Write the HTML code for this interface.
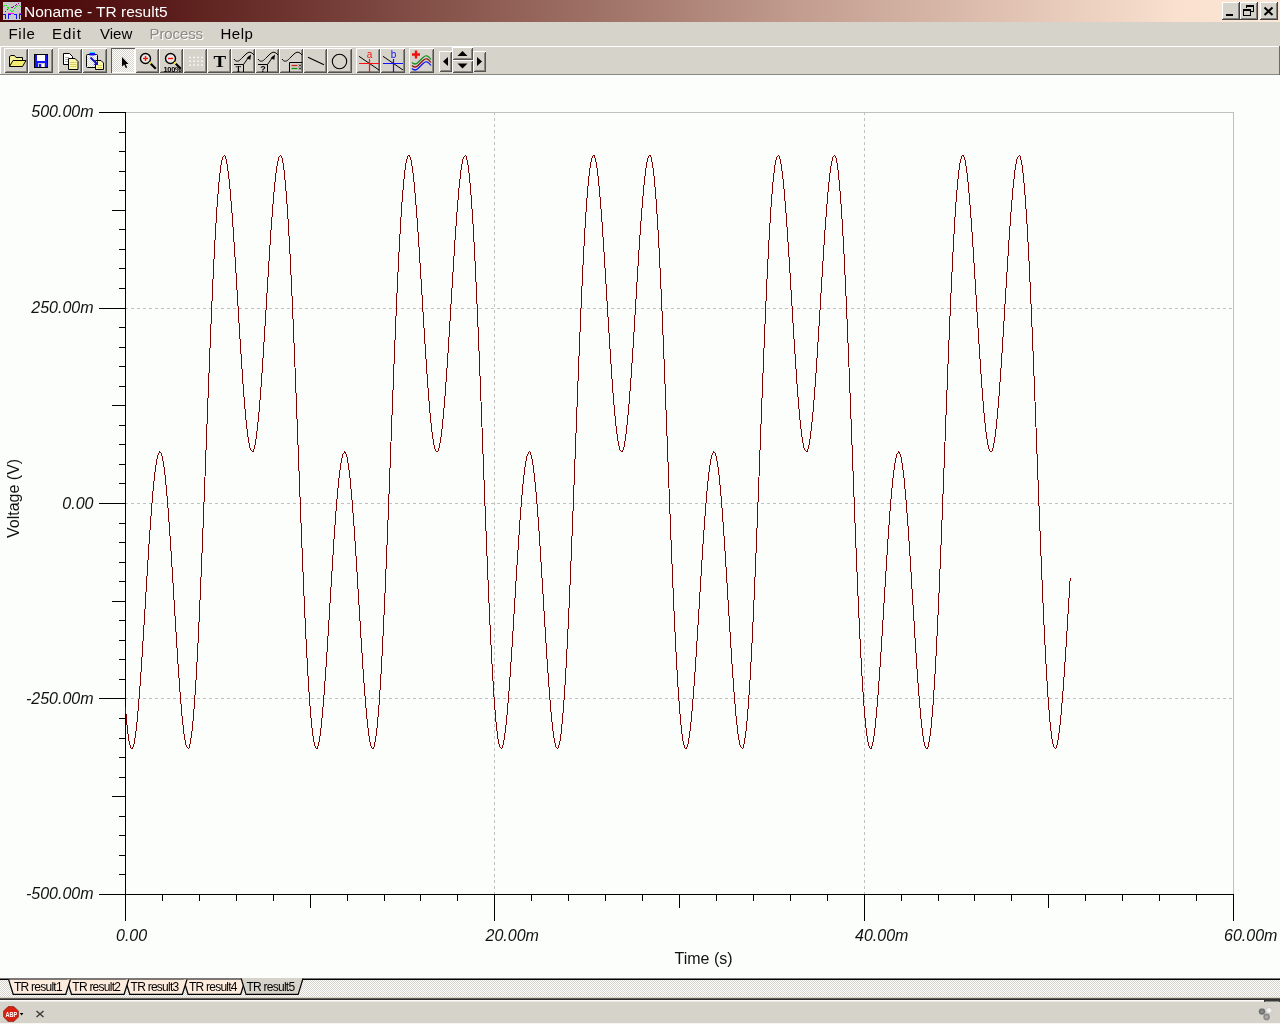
<!DOCTYPE html>
<html><head><meta charset="utf-8"><title>Noname - TR result5</title>
<style>
html,body{margin:0;padding:0;width:1280px;height:1024px;overflow:hidden;background:#fcfefc;font-family:"Liberation Sans",sans-serif;}
.abs{position:absolute}
#title{left:0;top:0;width:1280px;height:22px;background:linear-gradient(to right,#480306 0%,#581a18 12%,#a67a6e 50%,#c29d90 62.5%,#f9e0cf 92%,#fde8d7 100%);}
#title .cap{left:24px;top:3px;color:#fff;font-size:15.5px;line-height:18px;white-space:nowrap;letter-spacing:0}
#menu{left:0;top:22px;width:1280px;height:24px;background:#d6d3ca}
#menu span{position:absolute;top:3px;font-size:15px;line-height:18px;color:#000;white-space:nowrap}
#menu span.dis{color:#8c8a84;text-shadow:1px 1px 0 #fff}
#tool{left:0;top:46px;width:1280px;height:29px;background:#d6d3ca}
#plot{left:0;top:75px;width:1280px;height:904px;background:#fcfefc}
#tabs{left:0;top:978px;width:1280px;height:22px}
#status{left:0;top:1000px;width:1280px;height:24px;background:#d6d3ca}
svg{position:absolute;left:0;top:0;overflow:visible}
.grid{stroke:#c0c0c0;stroke-width:1;stroke-dasharray:3 3;shape-rendering:crispEdges;fill:none}
.lb{stroke:#c0c0c0;stroke-width:1;fill:none;shape-rendering:crispEdges}
.ax{stroke:#000;stroke-width:1;fill:none;shape-rendering:crispEdges}
.cvf{fill:#800000;stroke:none;shape-rendering:crispEdges}
.it{font:italic 16px "Liberation Sans",sans-serif;fill:#111}
.rg{font:16px "Liberation Sans",sans-serif;fill:#111}
.tb{font:12px "Liberation Sans",sans-serif;fill:#000;letter-spacing:-.75px}
</style></head><body><div id="root" style="position:absolute;left:0;top:0;width:1280px;height:1024px;will-change:transform;">
<div id="title" class="abs">
<svg width="24" height="22" viewBox="0 0 24 22" shape-rendering="crispEdges"><rect x="3" y="2" width="18" height="18" fill="#c9c9c9"/><rect x="3" y="6" width="1" height="1" fill="#10f010"/><rect x="4" y="5" width="1" height="1" fill="#10f010"/><rect x="6" y="5" width="1" height="1" fill="#10f010"/><rect x="7" y="7" width="1" height="1" fill="#10f010"/><rect x="8" y="7" width="1" height="1" fill="#10f010"/><rect x="8" y="8" width="1" height="1" fill="#10f010"/><rect x="10" y="10" width="1" height="1" fill="#10f010"/><rect x="11" y="11" width="1" height="1" fill="#10f010"/><rect x="12" y="11" width="1" height="1" fill="#10f010"/><rect x="13" y="10" width="1" height="1" fill="#10f010"/><rect x="14" y="8" width="1" height="1" fill="#10f010"/><rect x="15" y="7" width="1" height="1" fill="#10f010"/><rect x="16" y="6" width="1" height="1" fill="#10f010"/><rect x="17" y="5" width="1" height="1" fill="#10f010"/><rect x="19" y="5" width="1" height="1" fill="#10f010"/><rect x="20" y="6" width="1" height="1" fill="#10f010"/><rect x="5" y="11" width="1" height="1" fill="#900090"/><rect x="7" y="9" width="1" height="1" fill="#900090"/><rect x="11" y="7" width="1" height="1" fill="#900090"/><rect x="12" y="7" width="1" height="1" fill="#900090"/><rect x="13" y="6" width="1" height="1" fill="#900090"/><rect x="15" y="5" width="1" height="1" fill="#900090"/><rect x="16" y="4" width="1" height="1" fill="#900090"/><rect x="18" y="3" width="1" height="1" fill="#900090"/><rect x="8" y="13" width="6" height="1" fill="#ff10e0"/><rect x="19" y="13" width="2" height="1" fill="#ff10e0"/><rect x="3" y="14" width="3" height="1" fill="#1010ff"/><rect x="8" y="14" width="3" height="1" fill="#1010ff"/><rect x="14" y="14" width="3" height="1" fill="#1010ff"/><rect x="19" y="14" width="2" height="1" fill="#1010ff"/><rect x="5" y="14" width="1" height="5" fill="#1010ff"/><rect x="8" y="14" width="1" height="5" fill="#1010ff"/><rect x="16" y="14" width="1" height="5" fill="#1010ff"/><rect x="19" y="14" width="1" height="5" fill="#1010ff"/></svg>
<div class="abs cap">Noname - TR result5</div>
<svg width="1280" height="22" viewBox="0 0 1280 22" shape-rendering="crispEdges">
<g id="wb">
<rect x="1222" y="2" width="17" height="17" fill="#d6d3ca"/><path d="M1222.5 19V2.5H1239" stroke="#fff" fill="none"/><path d="M1223 18.5H1238.5V3" stroke="#808080" fill="none"/><path d="M1222 19.5H1239.5V2" stroke="#404040" fill="none"/>
<rect x="1226" y="14" width="7" height="2" fill="#000"/>
<rect x="1240" y="2" width="17" height="17" fill="#d6d3ca"/><path d="M1240.5 19V2.5H1257" stroke="#fff" fill="none"/><path d="M1241 18.5H1256.5V3" stroke="#808080" fill="none"/><path d="M1240 19.5H1257.5V2" stroke="#404040" fill="none"/>
<path d="M1246.5 8V5.5H1253.5V11.5H1251" stroke="#000" fill="none"/><path d="M1246 6H1254" stroke="#000" stroke-width="1.600"/>
<path d="M1243.5 9.5H1250.5V15.5H1243.5Z" stroke="#000" fill="none"/><path d="M1243 10H1251" stroke="#000" stroke-width="1.600"/>
<rect x="1260" y="2" width="17" height="17" fill="#d6d3ca"/><path d="M1260.5 19V2.5H1277" stroke="#fff" fill="none"/><path d="M1261 18.5H1276.5V3" stroke="#808080" fill="none"/><path d="M1260 19.5H1277.5V2" stroke="#404040" fill="none"/>
</g>
<path d="M1264.5 7.5L1272.5 15M1272.5 7.5L1264.5 15" stroke="#000" stroke-width="2" fill="none" shape-rendering="auto"/>
</svg>
</div>
<div id="menu" class="abs">
<span style="left:8.5px;letter-spacing:.7px">File</span><span style="left:52px;letter-spacing:1px">Edit</span><span style="left:100px">View</span><span class="dis" style="left:149.5px;letter-spacing:-.1px">Process</span><span style="left:220.5px;letter-spacing:.5px">Help</span>
</div>
<div id="tool" class="abs">
<svg width="1280" height="29" viewBox="0 46 1280 29">
<defs><pattern id="dz" width="2" height="2" patternUnits="userSpaceOnUse"><rect width="2" height="2" fill="#fff"/><rect width="1" height="1" fill="#d6d3ca"/><rect x="1" y="1" width="1" height="1" fill="#d6d3ca"/></pattern></defs>
<g shape-rendering="crispEdges">
<path d="M0 46.5H1280" stroke="#fff"/><path d="M0.5 46V75" stroke="#fff"/>
<path d="M0 74.5H1280" stroke="#8a8882"/><path d="M1279.5 46V75" stroke="#6e6c68"/>
<rect x="4" y="48" width="24" height="25" fill="#d6d3ca"/><path d="M4.5 73V48.5H28" stroke="#fff" fill="none"/><path d="M6 71.5H26.5V50" stroke="#8a8882" fill="none"/><path d="M5 72.5H27.5V49" stroke="#55534f" fill="none"/>
<rect x="28" y="48" width="25" height="25" fill="#d6d3ca"/><path d="M28.5 73V48.5H53" stroke="#fff" fill="none"/><path d="M30 71.5H51.5V50" stroke="#8a8882" fill="none"/><path d="M29 72.5H52.5V49" stroke="#55534f" fill="none"/>
<rect x="58" y="48" width="24" height="25" fill="#d6d3ca"/><path d="M58.5 73V48.5H82" stroke="#fff" fill="none"/><path d="M60 71.5H80.5V50" stroke="#8a8882" fill="none"/><path d="M59 72.5H81.5V49" stroke="#55534f" fill="none"/>
<rect x="82" y="48" width="25" height="25" fill="#d6d3ca"/><path d="M82.5 73V48.5H107" stroke="#fff" fill="none"/><path d="M84 71.5H105.5V50" stroke="#8a8882" fill="none"/><path d="M83 72.5H106.5V49" stroke="#55534f" fill="none"/>
<rect x="135" y="48" width="24" height="25" fill="#d6d3ca"/><path d="M135.5 73V48.5H159" stroke="#fff" fill="none"/><path d="M137 71.5H157.5V50" stroke="#8a8882" fill="none"/><path d="M136 72.5H158.5V49" stroke="#55534f" fill="none"/>
<rect x="159" y="48" width="24" height="25" fill="#d6d3ca"/><path d="M159.5 73V48.5H183" stroke="#fff" fill="none"/><path d="M161 71.5H181.5V50" stroke="#8a8882" fill="none"/><path d="M160 72.5H182.5V49" stroke="#55534f" fill="none"/>
<rect x="183" y="48" width="24" height="25" fill="#d6d3ca"/><path d="M183.5 73V48.5H207" stroke="#fff" fill="none"/><path d="M185 71.5H205.5V50" stroke="#8a8882" fill="none"/><path d="M184 72.5H206.5V49" stroke="#55534f" fill="none"/>
<rect x="207" y="48" width="24" height="25" fill="#d6d3ca"/><path d="M207.5 73V48.5H231" stroke="#fff" fill="none"/><path d="M209 71.5H229.5V50" stroke="#8a8882" fill="none"/><path d="M208 72.5H230.5V49" stroke="#55534f" fill="none"/>
<rect x="231" y="48" width="24" height="25" fill="#d6d3ca"/><path d="M231.5 73V48.5H255" stroke="#fff" fill="none"/><path d="M233 71.5H253.5V50" stroke="#8a8882" fill="none"/><path d="M232 72.5H254.5V49" stroke="#55534f" fill="none"/>
<rect x="255" y="48" width="24" height="25" fill="#d6d3ca"/><path d="M255.5 73V48.5H279" stroke="#fff" fill="none"/><path d="M257 71.5H277.5V50" stroke="#8a8882" fill="none"/><path d="M256 72.5H278.5V49" stroke="#55534f" fill="none"/>
<rect x="279" y="48" width="24" height="25" fill="#d6d3ca"/><path d="M279.5 73V48.5H303" stroke="#fff" fill="none"/><path d="M281 71.5H301.5V50" stroke="#8a8882" fill="none"/><path d="M280 72.5H302.5V49" stroke="#55534f" fill="none"/>
<rect x="303" y="48" width="24" height="25" fill="#d6d3ca"/><path d="M303.5 73V48.5H327" stroke="#fff" fill="none"/><path d="M305 71.5H325.5V50" stroke="#8a8882" fill="none"/><path d="M304 72.5H326.5V49" stroke="#55534f" fill="none"/>
<rect x="327" y="48" width="25" height="25" fill="#d6d3ca"/><path d="M327.5 73V48.5H352" stroke="#fff" fill="none"/><path d="M329 71.5H350.5V50" stroke="#8a8882" fill="none"/><path d="M328 72.5H351.5V49" stroke="#55534f" fill="none"/>
<rect x="356" y="48" width="24" height="25" fill="#d6d3ca"/><path d="M356.5 73V48.5H380" stroke="#fff" fill="none"/><path d="M358 71.5H378.5V50" stroke="#8a8882" fill="none"/><path d="M357 72.5H379.5V49" stroke="#55534f" fill="none"/>
<rect x="380" y="48" width="25" height="25" fill="#d6d3ca"/><path d="M380.5 73V48.5H405" stroke="#fff" fill="none"/><path d="M382 71.5H403.5V50" stroke="#8a8882" fill="none"/><path d="M381 72.5H404.5V49" stroke="#55534f" fill="none"/>
<rect x="409" y="48" width="25" height="25" fill="#d6d3ca"/><path d="M409.5 73V48.5H434" stroke="#fff" fill="none"/><path d="M411 71.5H432.5V50" stroke="#8a8882" fill="none"/><path d="M410 72.5H433.5V49" stroke="#55534f" fill="none"/>
<rect x="111" y="48" width="24" height="25" fill="url(#dz)"/><path d="M111.5 73V48.5H135" stroke="#5a5854" fill="none"/><path d="M112 72.5H134.5V49" stroke="#fff" fill="none"/>
<rect x="439" y="51" width="13" height="21" fill="#d6d3ca"/><path d="M439.5 72V51.5H452" stroke="#fff" fill="none"/><path d="M441 70.5H450.5V53" stroke="#8a8882" fill="none"/><path d="M440 71.5H451.5V52" stroke="#55534f" fill="none"/>
<rect x="473" y="51" width="13" height="21" fill="#d6d3ca"/><path d="M473.5 72V51.5H486" stroke="#fff" fill="none"/><path d="M475 70.5H484.5V53" stroke="#8a8882" fill="none"/><path d="M474 71.5H485.5V52" stroke="#55534f" fill="none"/>
<rect x="452" y="47" width="21" height="13" fill="#d6d3ca"/><path d="M452.5 60V47.5H473" stroke="#fff" fill="none"/><path d="M454 58.5H471.5V49" stroke="#8a8882" fill="none"/><path d="M453 59.5H472.5V48" stroke="#55534f" fill="none"/>
<rect x="452" y="60" width="21" height="13" fill="#d6d3ca"/><path d="M452.5 73V60.5H473" stroke="#fff" fill="none"/><path d="M454 71.5H471.5V62" stroke="#8a8882" fill="none"/><path d="M453 72.5H472.5V61" stroke="#55534f" fill="none"/>
</g>
<g stroke="#000" stroke-width="1" stroke-linejoin="round"><path d="M9.5 66.5V56.5L11 55.5H14.5L16 57.5H22.5V60" fill="#f6f29a"/><path d="M9.5 66.5L13 60.5H26L22.5 66.5Z" fill="#f3ee6e"/></g>
<g shape-rendering="crispEdges"><rect x="34.5" y="54.5" width="13" height="13" rx="1" fill="#1414ff" stroke="#000"/><rect x="37" y="55" width="8" height="6" fill="#fff"/><rect x="38" y="63" width="7" height="4" fill="#c8c8c8"/><rect x="39" y="64" width="2" height="3" fill="#1414ff"/><rect x="42" y="64" width="2" height="3" fill="#fff"/></g>
<g stroke="#000" stroke-width="1"><path d="M63.5 53.5H69.5L72.5 56.5V64.5H63.5Z" fill="#fff"/><path d="M65 57.5h4M65 59.5h3M65 61.5h3" stroke="#b0b0b0"/><path d="M68.5 58.5H75L78 61.5V69.5H68.5Z" fill="#fbf7b0"/><path d="M70 62.5h6.5M70 64.5h6.5M70 66.5h6.5" stroke="#d8d060"/></g>
<g stroke="#000" stroke-width="1"><rect x="86.5" y="54.5" width="11" height="13" rx="1" fill="url(#dz)"/><rect x="89.5" y="52.5" width="5.5" height="3" rx="1" fill="#1010ff" stroke="none"/><path d="M90 52.5h4.5" stroke="#20e0f0"/><path d="M95.5 60.5H101L103.5 63V69.5H95.5Z" fill="#fbf7b0"/><path d="M97.5 65.5h4.5M97.5 67.5h4.5" stroke="#d8d060"/><path d="M90.5 57.5L96 63" stroke="#1018c0" stroke-width="2"/><path d="M98 65V60.5L93.5 65Z" fill="#1018c0" stroke="none"/></g>
<path d="M122 57V66.5L124.200 64.5L125.800 68L127.200 67.400L125.600 64H128.5Z" fill="#000"/>
<g fill="none"><circle cx="145.5" cy="58.5" r="5" stroke="#000" stroke-width="1.400" fill="#e9e7e3"/><path d="M149.3 62.300L150.8 63.800" stroke="#f0f000" stroke-width="1.600"/><path d="M150.8 63.800L155.8 68.800" stroke="#000" stroke-width="2.200"/><path d="M143.0 58.5h5" stroke="#ff1010" stroke-width="1.400"/><path d="M145.5 56v5" stroke="#ff1010" stroke-width="1.400"/></g>
<g fill="none"><circle cx="170.5" cy="58.5" r="5" stroke="#000" stroke-width="1.400" fill="#e9e7e3"/><path d="M174.3 62.300L175.8 63.800" stroke="#f0f000" stroke-width="1.600"/><path d="M175.8 63.800L180.8 68.800" stroke="#000" stroke-width="2.200"/><path d="M168.0 58.5h5" stroke="#ff1010" stroke-width="1.400"/></g>
<text x="163.5" y="71.5" style="font:bold 7.5px 'Liberation Sans',sans-serif;fill:#000;letter-spacing:-.3px">100%</text>
<rect x="189.3" y="56.7" width="1.5" height="1.5" fill="#fff"/><rect x="189.3" y="60.5" width="1.5" height="1.5" fill="#fff"/><rect x="189.3" y="64.3" width="1.5" height="1.5" fill="#fff"/><rect x="193.3" y="56.7" width="1.5" height="1.5" fill="#fff"/><rect x="193.3" y="60.5" width="1.5" height="1.5" fill="#fff"/><rect x="193.3" y="64.3" width="1.5" height="1.5" fill="#fff"/><rect x="197.4" y="56.7" width="1.5" height="1.5" fill="#fff"/><rect x="197.4" y="60.5" width="1.5" height="1.5" fill="#fff"/><rect x="197.4" y="64.3" width="1.5" height="1.5" fill="#fff"/><rect x="201.3" y="56.7" width="1.5" height="1.5" fill="#fff"/><rect x="201.3" y="60.5" width="1.5" height="1.5" fill="#fff"/><rect x="201.3" y="64.3" width="1.5" height="1.5" fill="#fff"/>
<text transform="translate(219.800 67) scale(1.08 1)" text-anchor="middle" style="font:bold 17.5px 'Liberation Serif',serif;fill:#000">T</text>
<path d="M234.0 59C236.0 62 238.5 62 241.5 58.5L246.0 54C249.0 51.5 251.0 51.5 254.0 55" stroke="#000" stroke-width="1" fill="none"/>
<path d="M234.0 64.5H243.5V72M243.5 64.5L249.5 56" stroke="#000" fill="none"/>
<path d="M251.0 54.5L246.5 58.300L250.3 59.800Z" fill="#000"/>
<text x="238.5" y="71.5" text-anchor="middle" style="font:bold 8px 'Liberation Serif',serif;fill:#000">T</text>
<path d="M258.0 59C260.0 62 262.5 62 265.5 58.5L270.0 54C273.0 51.5 275.0 51.5 278.0 55" stroke="#000" stroke-width="1" fill="none"/>
<path d="M258.0 64.5H267.5V72M267.5 64.5L273.5 56" stroke="#000" fill="none"/>
<path d="M275.0 54.5L270.5 58.300L274.3 59.800Z" fill="#000"/>
<text x="263.0" y="72" text-anchor="middle" style="font:bold 9px 'Liberation Sans',sans-serif;fill:#000">?</text>
<path d="M282.0 59C284.0 62 286.5 62 289.5 58.5L294.0 54C297.0 51.5 299.0 51.5 302.0 55" stroke="#000" stroke-width="1" fill="none"/>
<path d="M289.5 72V62.5H302" stroke="#000" fill="none"/>
<path d="M291.5 65.5h6" stroke="#d02020" stroke-width="1.300"/><path d="M291.5 68.5h6" stroke="#109010" stroke-width="1.300"/>
<path d="M299 64.5l2 2m0 -2l-2 2M299 67.5l2 2m0 -2l-2 2" stroke="#000" stroke-width=".9"/>
<path d="M308 57.300L324 64.800" stroke="#000" stroke-width="1.100"/>
<circle cx="339.5" cy="61.5" r="7.200" stroke="#000" stroke-width="1.100" fill="none"/>
<path d="M359.0 56.300L379.0 70" stroke="#000" stroke-width="1"/>
<path d="M359.0 63.5h20M369.5 59v13" stroke="#ff1010" stroke-width="1.200" fill="none"/>
<text x="369.5" y="58" text-anchor="middle" style="font:10px 'Liberation Sans',sans-serif;fill:#ff1010">a</text>
<path d="M383.0 56.300L403.0 70" stroke="#000" stroke-width="1"/>
<path d="M383.0 63.5h20M393.5 59v13" stroke="#1010ff" stroke-width="1.200" fill="none"/>
<text x="393.5" y="58" text-anchor="middle" style="font:10px 'Liberation Sans',sans-serif;fill:#1010ff">b</text>
<path d="M412 54.5h8M416 50.5v8" stroke="#f01010" stroke-width="2.400"/>
<path d="M412 62.5C414 64.5 416 64.5 418 62.5L423 57.5C426 54.5 428 55.5 431 59.5" stroke="#109020" stroke-width="1.200" fill="none"/>
<path d="M412 65.5C414 67.5 416 67.5 418 65.5L423 60.5C426 57.5 428 58.5 431 62.5" stroke="#901010" stroke-width="1.200" fill="none"/>
<path d="M412 68.5C414 70.5 416 70.5 418 68.5L423 63.5C426 60.5 428 61.5 431 65.5" stroke="#1010ff" stroke-width="1.200" fill="none"/>
<path d="M443 61.5L448 57V66Z" fill="#000"/>
<path d="M482 61.5L477 57V66Z" fill="#000"/>
<path d="M462.5 51L467.5 56H457.5Z" fill="#000"/>
<path d="M462.5 68.5L467.5 63.5H457.5Z" fill="#000"/>
</svg>
</div>
<div id="plot" class="abs"><svg width="1280" height="904" viewBox="0 75 1280 904">
<line x1="125" y1="308.5" x2="1233" y2="308.5" class="grid"/>
<line x1="125" y1="503.5" x2="1233" y2="503.5" class="grid"/>
<line x1="125" y1="698.5" x2="1233" y2="698.5" class="grid"/>
<line x1="494.5" y1="112" x2="494.5" y2="894" class="grid"/>
<line x1="864.5" y1="112" x2="864.5" y2="894" class="grid"/>
<path d="M126 112.5H1233.5V894" class="lb"/>
<path d="M125.5 112V920 M99 894.5H1234" class="ax"/>
<line x1="99" y1="112.5" x2="126" y2="112.5" class="ax"/>
<line x1="119" y1="132.5" x2="126" y2="132.5" class="ax"/>
<line x1="119" y1="151.5" x2="126" y2="151.5" class="ax"/>
<line x1="119" y1="171.5" x2="126" y2="171.5" class="ax"/>
<line x1="119" y1="190.5" x2="126" y2="190.5" class="ax"/>
<line x1="112" y1="210.5" x2="126" y2="210.5" class="ax"/>
<line x1="119" y1="229.5" x2="126" y2="229.5" class="ax"/>
<line x1="119" y1="249.5" x2="126" y2="249.5" class="ax"/>
<line x1="119" y1="268.5" x2="126" y2="268.5" class="ax"/>
<line x1="119" y1="288.5" x2="126" y2="288.5" class="ax"/>
<line x1="99" y1="308.5" x2="126" y2="308.5" class="ax"/>
<line x1="119" y1="327.5" x2="126" y2="327.5" class="ax"/>
<line x1="119" y1="347.5" x2="126" y2="347.5" class="ax"/>
<line x1="119" y1="366.5" x2="126" y2="366.5" class="ax"/>
<line x1="119" y1="386.5" x2="126" y2="386.5" class="ax"/>
<line x1="112" y1="405.5" x2="126" y2="405.5" class="ax"/>
<line x1="119" y1="425.5" x2="126" y2="425.5" class="ax"/>
<line x1="119" y1="444.5" x2="126" y2="444.5" class="ax"/>
<line x1="119" y1="464.5" x2="126" y2="464.5" class="ax"/>
<line x1="119" y1="483.5" x2="126" y2="483.5" class="ax"/>
<line x1="99" y1="503.5" x2="126" y2="503.5" class="ax"/>
<line x1="119" y1="523.5" x2="126" y2="523.5" class="ax"/>
<line x1="119" y1="542.5" x2="126" y2="542.5" class="ax"/>
<line x1="119" y1="562.5" x2="126" y2="562.5" class="ax"/>
<line x1="119" y1="581.5" x2="126" y2="581.5" class="ax"/>
<line x1="112" y1="601.5" x2="126" y2="601.5" class="ax"/>
<line x1="119" y1="620.5" x2="126" y2="620.5" class="ax"/>
<line x1="119" y1="640.5" x2="126" y2="640.5" class="ax"/>
<line x1="119" y1="659.5" x2="126" y2="659.5" class="ax"/>
<line x1="119" y1="679.5" x2="126" y2="679.5" class="ax"/>
<line x1="99" y1="698.5" x2="126" y2="698.5" class="ax"/>
<line x1="119" y1="718.5" x2="126" y2="718.5" class="ax"/>
<line x1="119" y1="738.5" x2="126" y2="738.5" class="ax"/>
<line x1="119" y1="757.5" x2="126" y2="757.5" class="ax"/>
<line x1="119" y1="777.5" x2="126" y2="777.5" class="ax"/>
<line x1="112" y1="796.5" x2="126" y2="796.5" class="ax"/>
<line x1="119" y1="816.5" x2="126" y2="816.5" class="ax"/>
<line x1="119" y1="835.5" x2="126" y2="835.5" class="ax"/>
<line x1="119" y1="855.5" x2="126" y2="855.5" class="ax"/>
<line x1="119" y1="874.5" x2="126" y2="874.5" class="ax"/>
<line x1="99" y1="894.5" x2="126" y2="894.5" class="ax"/>
<line x1="125.5" y1="894" x2="125.5" y2="921" class="ax"/>
<line x1="162.5" y1="894" x2="162.5" y2="901" class="ax"/>
<line x1="199.5" y1="894" x2="199.5" y2="901" class="ax"/>
<line x1="236.5" y1="894" x2="236.5" y2="901" class="ax"/>
<line x1="273.5" y1="894" x2="273.5" y2="901" class="ax"/>
<line x1="310.5" y1="894" x2="310.5" y2="908" class="ax"/>
<line x1="347.5" y1="894" x2="347.5" y2="901" class="ax"/>
<line x1="384.5" y1="894" x2="384.5" y2="901" class="ax"/>
<line x1="420.5" y1="894" x2="420.5" y2="901" class="ax"/>
<line x1="457.5" y1="894" x2="457.5" y2="901" class="ax"/>
<line x1="494.5" y1="894" x2="494.5" y2="921" class="ax"/>
<line x1="531.5" y1="894" x2="531.5" y2="901" class="ax"/>
<line x1="568.5" y1="894" x2="568.5" y2="901" class="ax"/>
<line x1="605.5" y1="894" x2="605.5" y2="901" class="ax"/>
<line x1="642.5" y1="894" x2="642.5" y2="901" class="ax"/>
<line x1="679.5" y1="894" x2="679.5" y2="908" class="ax"/>
<line x1="716.5" y1="894" x2="716.5" y2="901" class="ax"/>
<line x1="753.5" y1="894" x2="753.5" y2="901" class="ax"/>
<line x1="790.5" y1="894" x2="790.5" y2="901" class="ax"/>
<line x1="827.5" y1="894" x2="827.5" y2="901" class="ax"/>
<line x1="864.5" y1="894" x2="864.5" y2="921" class="ax"/>
<line x1="901.5" y1="894" x2="901.5" y2="901" class="ax"/>
<line x1="938.5" y1="894" x2="938.5" y2="901" class="ax"/>
<line x1="974.5" y1="894" x2="974.5" y2="901" class="ax"/>
<line x1="1011.5" y1="894" x2="1011.5" y2="901" class="ax"/>
<line x1="1048.5" y1="894" x2="1048.5" y2="908" class="ax"/>
<line x1="1085.5" y1="894" x2="1085.5" y2="901" class="ax"/>
<line x1="1122.5" y1="894" x2="1122.5" y2="901" class="ax"/>
<line x1="1159.5" y1="894" x2="1159.5" y2="901" class="ax"/>
<line x1="1196.5" y1="894" x2="1196.5" y2="901" class="ax"/>
<line x1="1233.5" y1="894" x2="1233.5" y2="921" class="ax"/>
<path d="M125 707v7h1v-7zM126 714v11h1v-11zM127 725v9h1v-9zM128 734v7h1v-7zM129 741v4h1v-4zM130 745v3h1v-3zM131 748v1h1v-1zM132 747v2h1v-2zM133 744v3h1v-3zM134 738v6h1v-6zM135 731v7h1v-7zM136 722v9h1v-9zM137 711v11h1v-11zM138 699v12h1v-12zM139 686v13h1v-13zM140 672v14h1v-14zM141 657v15h1v-15zM142 641v16h1v-16zM143 625v16h1v-16zM144 609v16h1v-16zM145 592v17h1v-17zM146 576v16h1v-16zM147 560v16h1v-16zM148 544v16h1v-16zM149 530v14h1v-14zM150 516v14h1v-14zM151 503v13h1v-13zM152 491v12h1v-12zM153 481v10h1v-10zM154 472v9h1v-9zM155 465v7h1v-7zM156 459v6h1v-6zM157 455v4h1v-4zM158 453v2h1v-2zM159 451v2h1v-2zM160 452v1h1v-1zM161 453v3h1v-3zM162 456v5h1v-5zM163 461v6h1v-6zM164 467v8h1v-8zM165 475v10h1v-10zM166 485v11h1v-11zM167 496v12h1v-12zM168 508v14h1v-14zM169 522v14h1v-14zM170 536v15h1v-15zM171 551v16h1v-16zM172 567v16h1v-16zM173 583v17h1v-17zM174 600v16h1v-16zM175 616v16h1v-16zM176 632v16h1v-16zM177 648v16h1v-16zM178 664v14h1v-14zM179 678v14h1v-14zM180 692v12h1v-12zM181 704v12h1v-12zM182 716v9h1v-9zM183 725v9h1v-9zM184 734v6h1v-6zM185 740v5h1v-5zM186 745v2h1v-2zM187 747v1h1v-1zM188 748v1h1v-1zM189 744v4h1v-4zM190 738v6h1v-6zM191 731v7h1v-7zM192 721v10h1v-10zM193 709v12h1v-12zM194 695v14h1v-14zM195 680v15h1v-15zM196 662v18h1v-18zM197 643v19h1v-19zM198 622v21h1v-21zM199 600v22h1v-22zM200 577v23h1v-23zM201 553v24h1v-24zM202 528v25h1v-25zM203 502v26h1v-26zM204 477v25h1v-25zM205 450v26h1v-26zM206 424v26h1v-26zM207 398v26h1v-26zM208 373v25h1v-25zM209 348v25h1v-25zM210 324v24h1v-24zM211 301v23h1v-23zM212 279v22h1v-22zM213 259v20h1v-20zM214 240v19h1v-19zM215 223v17h1v-17zM216 207v16h1v-16zM217 194v13h1v-13zM218 182v12h1v-12zM219 173v9h1v-9zM220 165v8h1v-8zM221 160v5h1v-5zM222 157v3h1v-3zM223 156v1h1v-1zM224 155v1h1v-1zM225 156v3h1v-3zM226 159v5h1v-5zM227 164v7h1v-7zM228 171v8h1v-8zM229 179v10h1v-10zM230 189v12h1v-12zM231 201v12h1v-12zM232 213v14h1v-14zM233 227v15h1v-15zM234 242v15h1v-15zM235 257v16h1v-16zM236 273v17h1v-17zM237 290v16h1v-16zM238 306v17h1v-17zM239 323v16h1v-16zM240 339v15h1v-15zM241 354v15h1v-15zM242 369v15h1v-15zM243 384v13h1v-13zM244 397v12h1v-12zM245 409v11h1v-11zM246 420v9h1v-9zM247 429v8h1v-8zM248 437v6h1v-6zM249 443v5h1v-5zM250 448v2h1v-2zM251 450v1h1v-1zM252 451v1h1v-1zM253 449v3h1v-3zM254 445v4h1v-4zM255 439v6h1v-6zM256 431v8h1v-8zM257 422v9h1v-9zM258 412v10h1v-10zM259 400v12h1v-12zM260 387v13h1v-13zM261 373v14h1v-14zM262 358v15h1v-15zM263 342v16h1v-16zM264 326v16h1v-16zM265 310v16h1v-16zM266 293v17h1v-17zM267 277v16h1v-16zM268 261v16h1v-16zM269 245v16h1v-16zM270 230v15h1v-15zM271 217v13h1v-13zM272 204v13h1v-13zM273 192v12h1v-12zM274 182v10h1v-10zM275 173v9h1v-9zM276 166v7h1v-7zM277 161v5h1v-5zM278 157v4h1v-4zM279 156v1h1v-1zM280 155v1h1v-1zM281 156v2h1v-2zM282 158v5h1v-5zM283 163v7h1v-7zM284 170v10h1v-10zM285 180v11h1v-11zM286 191v13h1v-13zM287 204v15h1v-15zM288 219v17h1v-17zM289 236v18h1v-18zM290 254v21h1v-21zM291 275v21h1v-21zM292 296v23h1v-23zM293 319v24h1v-24zM294 343v24h1v-24zM295 368v25h1v-25zM296 393v26h1v-26zM297 419v26h1v-26zM298 445v26h1v-26zM299 471v26h1v-26zM300 497v26h1v-26zM301 523v25h1v-25zM302 548v24h1v-24zM303 572v24h1v-24zM304 596v22h1v-22zM305 618v21h1v-21zM306 639v19h1v-19zM307 658v18h1v-18zM308 676v16h1v-16zM309 692v14h1v-14zM310 706v12h1v-12zM311 718v10h1v-10zM312 728v8h1v-8zM313 736v6h1v-6zM314 742v4h1v-4zM315 746v2h1v-2zM316 748v1h1v-1zM317 746v3h1v-3zM318 742v4h1v-4zM319 736v6h1v-6zM320 728v8h1v-8zM321 718v10h1v-10zM322 707v11h1v-11zM323 695v12h1v-12zM324 681v14h1v-14zM325 667v14h1v-14zM326 652v15h1v-15zM327 636v16h1v-16zM328 620v16h1v-16zM329 603v17h1v-17zM330 587v16h1v-16zM331 571v16h1v-16zM332 555v16h1v-16zM333 539v16h1v-16zM334 525v14h1v-14zM335 511v14h1v-14zM336 499v12h1v-12zM337 488v11h1v-11zM338 478v10h1v-10zM339 470v8h1v-8zM340 463v7h1v-7zM341 458v5h1v-5zM342 454v4h1v-4zM343 453v1h1v-1zM344 451v2h1v-2zM345 452v2h1v-2zM346 454v3h1v-3zM347 457v6h1v-6zM348 463v7h1v-7zM349 470v8h1v-8zM350 478v11h1v-11zM351 489v11h1v-11zM352 500v13h1v-13zM353 513v13h1v-13zM354 526v15h1v-15zM355 541v15h1v-15zM356 556v16h1v-16zM357 572v17h1v-17zM358 589v16h1v-16zM359 605v16h1v-16zM360 621v17h1v-17zM361 638v15h1v-15zM362 653v16h1v-16zM363 669v14h1v-14zM364 683v13h1v-13zM365 696v12h1v-12zM366 708v11h1v-11zM367 719v9h1v-9zM368 728v8h1v-8zM369 736v6h1v-6zM370 742v4h1v-4zM371 746v2h1v-2zM372 748v1h1v-1zM373 747v2h1v-2zM374 742v5h1v-5zM375 736v6h1v-6zM376 728v8h1v-8zM377 717v11h1v-11zM378 705v12h1v-12zM379 690v15h1v-15zM380 674v16h1v-16zM381 656v18h1v-18zM382 636v20h1v-20zM383 615v21h1v-21zM384 593v22h1v-22zM385 569v24h1v-24zM386 545v24h1v-24zM387 520v25h1v-25zM388 494v26h1v-26zM389 468v26h1v-26zM390 442v26h1v-26zM391 415v26h1v-26zM392 390v25h1v-25zM393 364v26h1v-26zM394 340v24h1v-24zM395 316v24h1v-24zM396 293v23h1v-23zM397 272v21h1v-21zM398 252v20h1v-20zM399 234v18h1v-18zM400 217v17h1v-17zM401 202v15h1v-15zM402 190v12h1v-12zM403 179v11h1v-11zM404 170v9h1v-9zM405 163v7h1v-7zM406 159v4h1v-4zM407 156v3h1v-3zM408 155v1h1v-1zM409 155v2h1v-2zM410 157v3h1v-3zM411 160v6h1v-6zM412 166v7h1v-7zM413 173v9h1v-9zM414 182v11h1v-11zM415 193v12h1v-12zM416 205v13h1v-13zM417 218v14h1v-14zM418 232v15h1v-15zM419 247v16h1v-16zM420 263v16h1v-16zM421 279v16h1v-16zM422 295v17h1v-17zM423 312v16h1v-16zM424 328v16h1v-16zM425 344v15h1v-15zM426 359v15h1v-15zM427 374v14h1v-14zM428 388v13h1v-13zM429 401v12h1v-12zM430 413v10h1v-10zM431 423v9h1v-9zM432 432v7h1v-7zM433 439v6h1v-6zM434 445v4h1v-4zM435 449v2h1v-2zM436 451v1h1v-1zM437 451v1h1v-1zM438 448v3h1v-3zM439 443v5h1v-5zM440 437v6h1v-6zM441 429v8h1v-8zM442 419v10h1v-10zM443 408v11h1v-11zM444 396v12h1v-12zM445 382v14h1v-14zM446 368v14h1v-14zM447 353v15h1v-15zM448 337v16h1v-16zM449 321v16h1v-16zM450 304v17h1v-17zM451 288v16h1v-16zM452 272v16h1v-16zM453 256v16h1v-16zM454 240v16h1v-16zM455 226v14h1v-14zM456 212v14h1v-14zM457 200v12h1v-12zM458 188v12h1v-12zM459 179v9h1v-9zM460 170v9h1v-9zM461 164v6h1v-6zM462 159v5h1v-5zM463 157v2h1v-2zM464 156v1h1v-1zM465 155v1h1v-1zM466 156v4h1v-4zM467 160v5h1v-5zM468 165v8h1v-8zM469 173v10h1v-10zM470 183v12h1v-12zM471 195v14h1v-14zM472 209v15h1v-15zM473 224v18h1v-18zM474 242v19h1v-19zM475 261v21h1v-21zM476 282v22h1v-22zM477 304v23h1v-23zM478 327v24h1v-24zM479 351v25h1v-25zM480 376v25h1v-25zM481 402v25h1v-25zM482 428v26h1v-26zM483 454v26h1v-26zM484 480v26h1v-26zM485 506v25h1v-25zM486 531v25h1v-25zM487 556v24h1v-24zM488 580v23h1v-23zM489 603v22h1v-22zM490 625v20h1v-20zM491 645v19h1v-19zM492 664v17h1v-17zM493 681v16h1v-16zM494 697v13h1v-13zM495 710v12h1v-12zM496 722v9h1v-9zM497 731v8h1v-8zM498 739v5h1v-5zM499 744v3h1v-3zM500 747v1h1v-1zM501 748v1h1v-1zM502 745v3h1v-3zM503 740v5h1v-5zM504 733v7h1v-7zM505 725v8h1v-8zM506 715v10h1v-10zM507 703v12h1v-12zM508 691v12h1v-12zM509 677v14h1v-14zM510 662v15h1v-15zM511 647v15h1v-15zM512 631v16h1v-16zM513 614v17h1v-17zM514 598v16h1v-16zM515 581v17h1v-17zM516 565v16h1v-16zM517 550v15h1v-15zM518 535v15h1v-15zM519 520v15h1v-15zM520 507v13h1v-13zM521 495v12h1v-12zM522 484v11h1v-11zM523 475v9h1v-9zM524 467v8h1v-8zM525 461v6h1v-6zM526 456v5h1v-5zM527 454v2h1v-2zM528 452v2h1v-2zM529 451v1h1v-1zM530 452v3h1v-3zM531 455v4h1v-4zM532 459v6h1v-6zM533 465v8h1v-8zM534 473v9h1v-9zM535 482v10h1v-10zM536 492v12h1v-12zM537 504v13h1v-13zM538 517v14h1v-14zM539 531v15h1v-15zM540 546v16h1v-16zM541 562v16h1v-16zM542 578v16h1v-16zM543 594v17h1v-17zM544 611v16h1v-16zM545 627v16h1v-16zM546 643v16h1v-16zM547 659v14h1v-14zM548 673v14h1v-14zM549 687v13h1v-13zM550 700v12h1v-12zM551 712v10h1v-10zM552 722v9h1v-9zM553 731v7h1v-7zM554 738v5h1v-5zM555 743v4h1v-4zM556 747v1h1v-1zM557 748v1h1v-1zM558 745v3h1v-3zM559 741v4h1v-4zM560 734v7h1v-7zM561 724v10h1v-10zM562 713v11h1v-11zM563 700v13h1v-13zM564 685v15h1v-15zM565 668v17h1v-17zM566 649v19h1v-19zM567 629v20h1v-20zM568 608v21h1v-21zM569 585v23h1v-23zM570 561v24h1v-24zM571 536v25h1v-25zM572 511v25h1v-25zM573 485v26h1v-26zM574 459v26h1v-26zM575 433v26h1v-26zM576 407v26h1v-26zM577 381v26h1v-26zM578 356v25h1v-25zM579 332v24h1v-24zM580 308v24h1v-24zM581 286v22h1v-22zM582 265v21h1v-21zM583 246v19h1v-19zM584 228v18h1v-18zM585 212v16h1v-16zM586 198v14h1v-14zM587 186v12h1v-12zM588 176v10h1v-10zM589 168v8h1v-8zM590 162v6h1v-6zM591 158v4h1v-4zM592 156v2h1v-2zM593 155v1h1v-1zM594 155v3h1v-3zM595 158v4h1v-4zM596 162v6h1v-6zM597 168v8h1v-8zM598 176v10h1v-10zM599 186v11h1v-11zM600 197v12h1v-12zM601 209v13h1v-13zM602 222v15h1v-15zM603 237v15h1v-15zM604 252v16h1v-16zM605 268v16h1v-16zM606 284v17h1v-17zM607 301v16h1v-16zM608 317v16h1v-16zM609 333v16h1v-16zM610 349v15h1v-15zM611 364v15h1v-15zM612 379v14h1v-14zM613 393v12h1v-12zM614 405v11h1v-11zM615 416v10h1v-10zM616 426v8h1v-8zM617 434v7h1v-7zM618 441v5h1v-5zM619 446v4h1v-4zM620 450v1h1v-1zM621 451v1h1v-1zM622 450v2h1v-2zM623 447v3h1v-3zM624 441v6h1v-6zM625 434v7h1v-7zM626 425v9h1v-9zM627 415v10h1v-10zM628 404v11h1v-11zM629 391v13h1v-13zM630 378v13h1v-13zM631 363v15h1v-15zM632 348v15h1v-15zM633 332v16h1v-16zM634 315v17h1v-17zM635 299v16h1v-16zM636 282v17h1v-17zM637 266v16h1v-16zM638 250v16h1v-16zM639 235v15h1v-15zM640 221v14h1v-14zM641 208v13h1v-13zM642 196v12h1v-12zM643 185v11h1v-11zM644 176v9h1v-9zM645 168v8h1v-8zM646 162v6h1v-6zM647 158v4h1v-4zM648 156v2h1v-2zM649 155v1h1v-1zM650 155v2h1v-2zM651 157v5h1v-5zM652 162v6h1v-6zM653 168v8h1v-8zM654 176v11h1v-11zM655 187v12h1v-12zM656 199v15h1v-15zM657 214v16h1v-16zM658 230v18h1v-18zM659 248v20h1v-20zM660 268v21h1v-21zM661 289v22h1v-22zM662 311v24h1v-24zM663 335v24h1v-24zM664 359v25h1v-25zM665 384v26h1v-26zM666 410v26h1v-26zM667 436v26h1v-26zM668 462v26h1v-26zM669 489v25h1v-25zM670 514v26h1v-26zM671 540v24h1v-24zM672 564v24h1v-24zM673 588v23h1v-23zM674 611v21h1v-21zM675 632v20h1v-20zM676 652v18h1v-18zM677 670v17h1v-17zM678 687v14h1v-14zM679 701v13h1v-13zM680 714v11h1v-11zM681 725v9h1v-9zM682 734v7h1v-7zM683 741v4h1v-4zM684 745v3h1v-3zM685 748v1h1v-1zM686 747v2h1v-2zM687 744v3h1v-3zM688 738v6h1v-6zM689 731v7h1v-7zM690 722v9h1v-9zM691 711v11h1v-11zM692 699v12h1v-12zM693 686v13h1v-13zM694 672v14h1v-14zM695 657v15h1v-15zM696 641v16h1v-16zM697 625v16h1v-16zM698 609v16h1v-16zM699 592v17h1v-17zM700 576v16h1v-16zM701 560v16h1v-16zM702 544v16h1v-16zM703 530v14h1v-14zM704 516v14h1v-14zM705 503v13h1v-13zM706 491v12h1v-12zM707 481v10h1v-10zM708 472v9h1v-9zM709 465v7h1v-7zM710 459v6h1v-6zM711 455v4h1v-4zM712 453v2h1v-2zM713 451v2h1v-2zM714 452v1h1v-1zM715 453v3h1v-3zM716 456v5h1v-5zM717 461v6h1v-6zM718 467v8h1v-8zM719 475v10h1v-10zM720 485v11h1v-11zM721 496v12h1v-12zM722 508v14h1v-14zM723 522v14h1v-14zM724 536v15h1v-15zM725 551v16h1v-16zM726 567v16h1v-16zM727 583v17h1v-17zM728 600v16h1v-16zM729 616v16h1v-16zM730 632v16h1v-16zM731 648v16h1v-16zM732 664v14h1v-14zM733 678v14h1v-14zM734 692v12h1v-12zM735 704v12h1v-12zM736 716v9h1v-9zM737 725v9h1v-9zM738 734v6h1v-6zM739 740v5h1v-5zM740 745v2h1v-2zM741 747v1h1v-1zM742 748v1h1v-1zM743 744v4h1v-4zM744 738v6h1v-6zM745 731v7h1v-7zM746 721v10h1v-10zM747 709v12h1v-12zM748 695v14h1v-14zM749 680v15h1v-15zM750 662v18h1v-18zM751 643v19h1v-19zM752 622v21h1v-21zM753 600v22h1v-22zM754 577v23h1v-23zM755 553v24h1v-24zM756 528v25h1v-25zM757 502v26h1v-26zM758 477v25h1v-25zM759 450v26h1v-26zM760 424v26h1v-26zM761 398v26h1v-26zM762 373v25h1v-25zM763 348v25h1v-25zM764 324v24h1v-24zM765 301v23h1v-23zM766 279v22h1v-22zM767 259v20h1v-20zM768 240v19h1v-19zM769 223v17h1v-17zM770 207v16h1v-16zM771 194v13h1v-13zM772 182v12h1v-12zM773 173v9h1v-9zM774 165v8h1v-8zM775 160v5h1v-5zM776 157v3h1v-3zM777 156v1h1v-1zM778 155v1h1v-1zM779 156v3h1v-3zM780 159v5h1v-5zM781 164v7h1v-7zM782 171v8h1v-8zM783 179v10h1v-10zM784 189v12h1v-12zM785 201v12h1v-12zM786 213v14h1v-14zM787 227v15h1v-15zM788 242v15h1v-15zM789 257v16h1v-16zM790 273v17h1v-17zM791 290v16h1v-16zM792 306v17h1v-17zM793 323v16h1v-16zM794 339v15h1v-15zM795 354v15h1v-15zM796 369v15h1v-15zM797 384v13h1v-13zM798 397v12h1v-12zM799 409v11h1v-11zM800 420v9h1v-9zM801 429v8h1v-8zM802 437v6h1v-6zM803 443v5h1v-5zM804 448v2h1v-2zM805 450v1h1v-1zM806 451v1h1v-1zM807 449v3h1v-3zM808 445v4h1v-4zM809 439v6h1v-6zM810 431v8h1v-8zM811 422v9h1v-9zM812 412v10h1v-10zM813 400v12h1v-12zM814 387v13h1v-13zM815 373v14h1v-14zM816 358v15h1v-15zM817 342v16h1v-16zM818 326v16h1v-16zM819 310v16h1v-16zM820 293v17h1v-17zM821 277v16h1v-16zM822 261v16h1v-16zM823 245v16h1v-16zM824 230v15h1v-15zM825 217v13h1v-13zM826 204v13h1v-13zM827 192v12h1v-12zM828 182v10h1v-10zM829 173v9h1v-9zM830 166v7h1v-7zM831 161v5h1v-5zM832 157v4h1v-4zM833 156v1h1v-1zM834 155v1h1v-1zM835 156v2h1v-2zM836 158v5h1v-5zM837 163v7h1v-7zM838 170v10h1v-10zM839 180v11h1v-11zM840 191v13h1v-13zM841 204v15h1v-15zM842 219v17h1v-17zM843 236v18h1v-18zM844 254v21h1v-21zM845 275v21h1v-21zM846 296v23h1v-23zM847 319v24h1v-24zM848 343v24h1v-24zM849 368v25h1v-25zM850 393v26h1v-26zM851 419v26h1v-26zM852 445v26h1v-26zM853 471v26h1v-26zM854 497v26h1v-26zM855 523v25h1v-25zM856 548v24h1v-24zM857 572v24h1v-24zM858 596v22h1v-22zM859 618v21h1v-21zM860 639v19h1v-19zM861 658v18h1v-18zM862 676v16h1v-16zM863 692v14h1v-14zM864 706v12h1v-12zM865 718v10h1v-10zM866 728v8h1v-8zM867 736v6h1v-6zM868 742v4h1v-4zM869 746v2h1v-2zM870 748v1h1v-1zM871 746v3h1v-3zM872 742v4h1v-4zM873 736v6h1v-6zM874 728v8h1v-8zM875 718v10h1v-10zM876 707v11h1v-11zM877 695v12h1v-12zM878 681v14h1v-14zM879 667v14h1v-14zM880 652v15h1v-15zM881 636v16h1v-16zM882 620v16h1v-16zM883 603v17h1v-17zM884 587v16h1v-16zM885 571v16h1v-16zM886 555v16h1v-16zM887 539v16h1v-16zM888 525v14h1v-14zM889 511v14h1v-14zM890 499v12h1v-12zM891 488v11h1v-11zM892 478v10h1v-10zM893 470v8h1v-8zM894 463v7h1v-7zM895 458v5h1v-5zM896 454v4h1v-4zM897 453v1h1v-1zM898 451v2h1v-2zM899 452v2h1v-2zM900 454v3h1v-3zM901 457v6h1v-6zM902 463v7h1v-7zM903 470v8h1v-8zM904 478v11h1v-11zM905 489v11h1v-11zM906 500v13h1v-13zM907 513v13h1v-13zM908 526v15h1v-15zM909 541v15h1v-15zM910 556v16h1v-16zM911 572v17h1v-17zM912 589v16h1v-16zM913 605v16h1v-16zM914 621v17h1v-17zM915 638v15h1v-15zM916 653v16h1v-16zM917 669v14h1v-14zM918 683v13h1v-13zM919 696v12h1v-12zM920 708v11h1v-11zM921 719v9h1v-9zM922 728v8h1v-8zM923 736v6h1v-6zM924 742v4h1v-4zM925 746v2h1v-2zM926 748v1h1v-1zM927 747v2h1v-2zM928 742v5h1v-5zM929 736v6h1v-6zM930 728v8h1v-8zM931 717v11h1v-11zM932 705v12h1v-12zM933 690v15h1v-15zM934 674v16h1v-16zM935 656v18h1v-18zM936 636v20h1v-20zM937 615v21h1v-21zM938 593v22h1v-22zM939 569v24h1v-24zM940 545v24h1v-24zM941 520v25h1v-25zM942 494v26h1v-26zM943 468v26h1v-26zM944 442v26h1v-26zM945 415v26h1v-26zM946 390v25h1v-25zM947 364v26h1v-26zM948 340v24h1v-24zM949 316v24h1v-24zM950 293v23h1v-23zM951 272v21h1v-21zM952 252v20h1v-20zM953 234v18h1v-18zM954 217v17h1v-17zM955 202v15h1v-15zM956 190v12h1v-12zM957 179v11h1v-11zM958 170v9h1v-9zM959 163v7h1v-7zM960 159v4h1v-4zM961 156v3h1v-3zM962 155v1h1v-1zM963 155v2h1v-2zM964 157v3h1v-3zM965 160v6h1v-6zM966 166v7h1v-7zM967 173v9h1v-9zM968 182v11h1v-11zM969 193v12h1v-12zM970 205v13h1v-13zM971 218v14h1v-14zM972 232v15h1v-15zM973 247v16h1v-16zM974 263v16h1v-16zM975 279v16h1v-16zM976 295v17h1v-17zM977 312v16h1v-16zM978 328v16h1v-16zM979 344v15h1v-15zM980 359v15h1v-15zM981 374v14h1v-14zM982 388v13h1v-13zM983 401v12h1v-12zM984 413v10h1v-10zM985 423v9h1v-9zM986 432v7h1v-7zM987 439v6h1v-6zM988 445v4h1v-4zM989 449v2h1v-2zM990 451v1h1v-1zM991 451v1h1v-1zM992 448v3h1v-3zM993 443v5h1v-5zM994 437v6h1v-6zM995 429v8h1v-8zM996 419v10h1v-10zM997 408v11h1v-11zM998 396v12h1v-12zM999 382v14h1v-14zM1000 368v14h1v-14zM1001 353v15h1v-15zM1002 337v16h1v-16zM1003 321v16h1v-16zM1004 304v17h1v-17zM1005 288v16h1v-16zM1006 272v16h1v-16zM1007 256v16h1v-16zM1008 240v16h1v-16zM1009 226v14h1v-14zM1010 212v14h1v-14zM1011 200v12h1v-12zM1012 188v12h1v-12zM1013 179v9h1v-9zM1014 170v9h1v-9zM1015 164v6h1v-6zM1016 159v5h1v-5zM1017 157v2h1v-2zM1018 156v1h1v-1zM1019 155v1h1v-1zM1020 156v4h1v-4zM1021 160v5h1v-5zM1022 165v8h1v-8zM1023 173v10h1v-10zM1024 183v12h1v-12zM1025 195v14h1v-14zM1026 209v15h1v-15zM1027 224v18h1v-18zM1028 242v19h1v-19zM1029 261v21h1v-21zM1030 282v22h1v-22zM1031 304v23h1v-23zM1032 327v24h1v-24zM1033 351v25h1v-25zM1034 376v25h1v-25zM1035 402v25h1v-25zM1036 428v26h1v-26zM1037 454v26h1v-26zM1038 480v26h1v-26zM1039 506v25h1v-25zM1040 531v25h1v-25zM1041 556v24h1v-24zM1042 580v23h1v-23zM1043 603v22h1v-22zM1044 625v20h1v-20zM1045 645v19h1v-19zM1046 664v17h1v-17zM1047 681v16h1v-16zM1048 697v13h1v-13zM1049 710v12h1v-12zM1050 722v9h1v-9zM1051 731v8h1v-8zM1052 739v5h1v-5zM1053 744v3h1v-3zM1054 747v1h1v-1zM1055 748v1h1v-1zM1056 745v3h1v-3zM1057 740v5h1v-5zM1058 733v7h1v-7zM1059 725v8h1v-8zM1060 715v10h1v-10zM1061 703v12h1v-12zM1062 691v12h1v-12zM1063 677v14h1v-14zM1064 662v15h1v-15zM1065 647v15h1v-15zM1066 631v16h1v-16zM1067 614v17h1v-17zM1068 598v16h1v-16zM1069 581v17h1v-17zM1070 578v3h1v-3z" class="cvf"/>
<text x="93.5" y="117.0" class="it" text-anchor="end">500.00m</text>
<text x="93.5" y="312.5" class="it" text-anchor="end">250.00m</text>
<text x="93.5" y="509.0" class="it" text-anchor="end">0.00</text>
<text x="93.5" y="703.5" class="it" text-anchor="end">-250.00m</text>
<text x="93.5" y="899.0" class="it" text-anchor="end">-500.00m</text>
<text x="116.0" y="941" class="it">0.00</text>
<text x="485.5" y="941" class="it">20.00m</text>
<text x="855.0" y="941" class="it">40.00m</text>
<text x="1224.0" y="941" class="it">60.00m</text>
<text x="674.5" y="963.5" class="rg">Time (s)</text>
<text transform="translate(19 538) rotate(-90)" class="rg">Voltage (V)</text>
</svg></div>
<div id="tabs" class="abs">
<svg width="1280" height="22" viewBox="0 978 1280 22">
<rect x="0" y="978" width="1280" height="19" fill="url(#dz)" shape-rendering="crispEdges"/>
<rect x="0" y="978" width="1280" height="1" fill="#7a7a7a"/>
<rect x="0" y="979" width="1280" height="1" fill="#000"/>
<rect x="0" y="997" width="1280" height="1" fill="#d6d3ca"/>
<rect x="0" y="998" width="1280" height="1" fill="#5e5c58"/>
<rect x="0" y="999" width="1280" height="1" fill="#2e2d2b"/>
<path d="M183.5 979.5L188.1 994.300H240.7L245.3 979.5" fill="#fdebdd" stroke="#000" stroke-width="1.200"/>
<text x="188.9" y="991" class="tb">TR result4</text>
<path d="M125.2 979.5L129.8 994.300H182.4L187.0 979.5" fill="#fdebdd" stroke="#000" stroke-width="1.200"/>
<text x="130.6" y="991" class="tb">TR result3</text>
<path d="M66.9 979.5L71.5 994.300H124.1L128.7 979.5" fill="#fdebdd" stroke="#000" stroke-width="1.200"/>
<text x="72.3" y="991" class="tb">TR result2</text>
<path d="M8.6 979.5L13.2 994.300H65.8L70.4 979.5" fill="#fdebdd" stroke="#000" stroke-width="1.200"/>
<text x="14.0" y="991" class="tb">TR result1</text>
<path d="M241.0 978L246.0 994.300H298.2L303.2 978Z" fill="#d6d3ca"/>
<path d="M241.2 978.5L246.0 994.300H298.2L303.0 978.5" fill="none" stroke="#000" stroke-width="1.200"/>
<text x="246.5" y="991" class="tb">TR result5</text>
</svg>
</div>
<div id="status" class="abs">
<svg width="1280" height="24" viewBox="0 1000 1280 24">
<rect x="0" y="1000" width="1280" height="1" fill="#fbfaf8"/>
<rect x="0" y="1001" width="1280" height="1" fill="#e9e7e2"/>
<rect x="0" y="1023" width="1280" height="1" fill="#f6f5f2"/>
<polygon points="18.3,1017.0 14.0,1021.3 8.0,1021.3 3.7,1017.0 3.7,1011.0 8.0,1006.7 14.0,1006.7 18.3,1011.0" fill="#d8200f" stroke="#9c2a22" stroke-width="1"/>
<text transform="translate(11.300 1017) scale(.7 1)" text-anchor="middle" style="font:bold 8px 'Liberation Sans',sans-serif;fill:#fff">ABP</text>
<path d="M19.800 1013h3.600l-1.800 2.400Z" fill="#000"/>
<path d="M36.5 1011L43.5 1017M43.5 1011L36.5 1017" stroke="#3c3b39" stroke-width="1.5"/>
<defs><radialGradient id="b1"><stop offset="0" stop-color="#9a9a9a"/><stop offset=".75" stop-color="#6a6a6a"/><stop offset="1" stop-color="#8a8a8a"/></radialGradient><radialGradient id="b2"><stop offset="0" stop-color="#fff"/><stop offset=".7" stop-color="#e4e4e4"/><stop offset="1" stop-color="#c4c2be"/></radialGradient><radialGradient id="b3"><stop offset="0" stop-color="#bcbcbc"/><stop offset=".75" stop-color="#868686"/><stop offset="1" stop-color="#9a9a9a"/></radialGradient></defs>
<circle cx="1262" cy="1011.600" r="3.300" fill="url(#b1)"/><circle cx="1269" cy="1010.5" r="3.400" fill="url(#b2)"/><circle cx="1266.600" cy="1017" r="3.400" fill="url(#b3)"/>
<rect x="1264" y="1000" width="16" height="2" fill="#3a3a3a"/><rect x="1265" y="1001" width="14" height="1" fill="#8a8882"/>
</svg>
</div>
</div></body></html>
